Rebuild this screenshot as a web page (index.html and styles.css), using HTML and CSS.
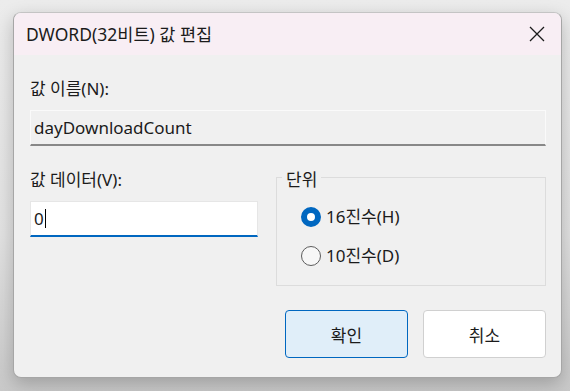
FILE: index.html
```html
<!DOCTYPE html>
<html lang="ko">
<head>
<meta charset="utf-8">
<title>DWORD(32비트) 값 편집</title>
<link rel="stylesheet" href="styles.css">
</head>
<body>
<div class="window">
  <div class="titlebar">
    <span class="title">DWORD(32비트) 값 편집</span>
    <span class="close">
      <svg width="16" height="16" viewBox="0 0 16 16"><path d="M1 1 L15 15 M15 1 L1 15" stroke="#1b1b1b" stroke-width="1.3" fill="none"/></svg>
    </span>
  </div>
  <div class="body">
    <div class="label">값 이름(N):</div>
    <div class="field readonly">dayDownloadCount</div>
    <div class="row">
      <div class="col">
        <div class="label">값 데이터(V):</div>
        <div class="field active">0<span class="caret"></span></div>
      </div>
      <fieldset class="group">
        <legend class="legend">단위</legend>
        <div class="radio"><span class="dot checked"></span><span>16진수(H)</span></div>
        <div class="radio"><span class="dot"></span><span>10진수(D)</span></div>
      </fieldset>
    </div>
    <div class="buttons">
      <div class="btn primary">확인</div>
      <div class="btn">취소</div>
    </div>
  </div>
</div>
</body>
</html>
```
FILE: styles.css
```css
html, body {
  margin: 0;
  padding: 0;
}
body {
  width: 570px;
  height: 391px;
  overflow: hidden;
  background: linear-gradient(#ececec, #e2e2e2 60%, #c9c9c9);
  padding: 12px 0 0 13px;
  box-sizing: border-box;
  font-family: "Noto Sans", "Noto Sans CJK KR", sans-serif;
  font-size: 17px;
  color: #1b1b1b;
}
.window {
  width: 549px;
  height: 366px;
  box-sizing: border-box;
  border: 1px solid #a6a6a6;
  border-top-color: #c4c4c4;
  border-radius: 8px;
  background: #f0f0f0;
  overflow: hidden;
  box-shadow: 0 6px 18px rgba(0,0,0,0.22);
  display: flex;
  flex-direction: column;
}
.titlebar {
  height: 42px;
  background: #f8eef4;
  display: flex;
  align-items: center;
  justify-content: space-between;
  padding: 0 16px 0 12px;
}
.title {
  font-size: 17.5px;
  line-height: 20px;
}
.close {
  display: flex;
  width: 16px;
  height: 16px;
}
.body {
  flex: 1;
  padding: 24px 15px 0 16px;
  display: flex;
  flex-direction: column;
}
.label {
  line-height: 20px;
  height: 20px;
}
.field {
  margin-top: 11px;
  height: 36px;
  box-sizing: border-box;
  padding: 0 3px;
  display: flex;
  align-items: center;
  line-height: 20px;
}
.readonly {
  border: 1px solid #fafafa;
  border-bottom: 2px solid #888888;
  background: #f0f0f0;
}
.active {
  border: 1px solid #e6e6e6;
  border-bottom: 2px solid #0067c0;
  background: #ffffff;
}
.caret {
  display: inline-block;
  width: 1px;
  height: 19px;
  background: #000;
  margin-left: 1px;
}
.row {
  display: flex;
  justify-content: space-between;
  margin-top: 24px;
}
.col {
  width: 228px;
}
.group {
  margin: -3px 0 0 0;
  width: 270px;
  height: 119px;
  box-sizing: border-box;
  border: 1px solid #dcdcdc;
  padding: 20px 0 0 24px;
}
.legend {
  padding: 6px 4px 0 4px;
  margin-left: -19px;
  line-height: 14px;
}
.radio {
  display: flex;
  align-items: center;
  height: 20px;
  gap: 5px;
  line-height: 20px;
  margin-bottom: 19px;
}
.dot {
  width: 20px;
  height: 20px;
  box-sizing: border-box;
  border-radius: 50%;
  border: 1px solid #5c5c5c;
  background: #f7f7f7;
}
.dot.checked {
  border: 6px solid #0067c0;
  background: #ffffff;
}
.buttons {
  display: flex;
  justify-content: flex-end;
  gap: 15px;
  margin-top: 24px;
}
.btn {
  width: 123px;
  height: 48px;
  box-sizing: border-box;
  border: 1px solid #d0d0d0;
  border-radius: 4px;
  background: #ffffff;
  display: flex;
  align-items: center;
  justify-content: center;
}
.btn.primary {
  background: #e0eef9;
  border-color: #0067c0;
}
```
